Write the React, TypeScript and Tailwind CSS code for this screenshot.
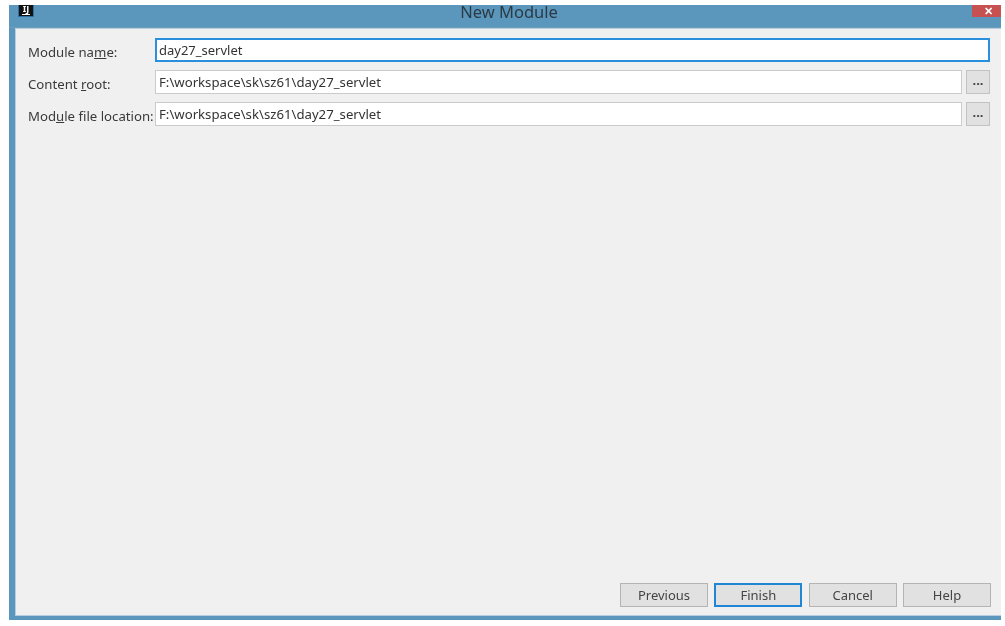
const FONT = "font-['Noto_Sans','Open_Sans',sans-serif]";

function PathRow({ label, value }: { label: React.ReactNode; value: string }) {
  return (
    <div className="flex h-6 items-center">
      <label className="w-[127px] shrink-0 pt-[5px] text-[13.2px] text-[#3a3a3a] whitespace-nowrap">{label}</label>
      <div className="flex h-6 min-w-0 flex-1 items-center border border-[#cbcbcb] bg-white pl-[3px] pt-[1px] text-[13.2px] text-[#333]">
        {value}
      </div>
      <button className="ml-1 flex h-6 w-6 shrink-0 items-center justify-center border border-[#c2c2c2] bg-[#e1e1e1] pb-[2px] text-[13px] font-bold text-[#444]">
        ...
      </button>
    </div>
  );
}

function FooterButton({ children, primary }: { children: string; primary?: boolean }) {
  return (
    <button
      className={
        "h-6 w-[88px] bg-[#e1e1e1] pt-[1px] text-[13px] text-[#444] " +
        (primary ? "border-2 border-[#1f86d6]" : "border border-[#b4b4b4]")
      }
    >
      {children}
    </button>
  );
}

export default function App() {
  return (
    <div className={"h-[626px] w-[1005px] overflow-hidden bg-white pb-[6px] pl-[9px] pr-[4px] pt-[5px] blur-[0.3px] " + FONT}>
      <div className="flex h-full flex-col bg-[#5b97bd] pb-1 pl-[6px]">
        <div className="relative -ml-[6px] flex h-[23px] shrink-0 justify-center border-b border-[#6f9db9]">
          <div className="absolute left-[9px] top-0 flex h-3 w-4 flex-col items-center border-x border-b border-[#2f6fa8] bg-[#111]">
            <span className="text-[9px] leading-[8px] font-bold text-white">IJ</span>
            <span className="mt-[1px] h-[1px] w-2 bg-white" />
          </div>
          <span className="ml-2 text-[16.5px] leading-[14px] text-[#2b3a44]">New Module</span>
          <div className="absolute right-0 top-0 flex h-3 w-[29px] items-center justify-center bg-[#c75050] pl-1 text-[11px] leading-3 font-bold text-white">
            ✕
          </div>
        </div>
        <div className="flex flex-1 flex-col justify-between border-b border-l border-t border-[#b5cfe0] bg-[#f0f0f0] pb-[8px] pl-[12px] pr-[11px] pt-[9px]">
          <div className="flex flex-col gap-2">
            <div className="flex h-6 items-center">
              <label className="w-[127px] shrink-0 pt-[5px] text-[13.2px] text-[#3a3a3a]">
                Module na<u>m</u>e:
              </label>
              <div className="flex h-6 flex-1 items-center border-2 border-[#2a8fdc] bg-white pl-[2px] pt-[1px] text-[13px] text-[#333]">
                day27_servlet
              </div>
            </div>
            <PathRow
              label={
                <>
                  Content <u>r</u>oot:
                </>
              }
              value="F:\workspace\sk\sz61\day27_servlet"
            />
            <PathRow
              label={
                <>
                  Mod<u>u</u>le file location:
                </>
              }
              value="F:\workspace\sk\sz61\day27_servlet"
            />
          </div>
          <div className="-mr-px flex justify-end gap-[6.33px]">
            <FooterButton>Previous</FooterButton>
            <FooterButton primary>Finish</FooterButton>
            <FooterButton>Cancel</FooterButton>
            <FooterButton>Help</FooterButton>
          </div>
        </div>
      </div>
    </div>
  );
}
